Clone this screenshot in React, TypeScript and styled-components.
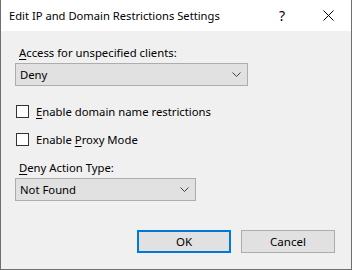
import React from "react";
import styled, { createGlobalStyle } from "styled-components";

const GlobalStyle = createGlobalStyle`
  html, body {
    margin: 0;
    padding: 0;
    background: #f0f0f0;
  }
  * {
    box-sizing: border-box;
  }
`;

const font = `"Noto Sans", "Open Sans", sans-serif`;

const Window = styled.div`
  width: 352px;
  height: 270px;
  display: flex;
  flex-direction: column;
  background: #f0f0f0;
  border: 1px solid #6f6f6f;
  border-top: none;
  font-family: ${font};
  font-size: 11.3px;
  color: #000;
`;

const TitleBar = styled.div`
  height: 31px;
  flex: none;
  display: flex;
  align-items: center;
  background: #fff;
  padding-left: 8px;
`;

const Title = styled.span`
  flex: 1;
  font-size: 11.2px;
  white-space: nowrap;
`;

const TitleButton = styled.button`
  width: 46px;
  height: 30px;
  border: none;
  background: transparent;
  display: flex;
  align-items: center;
  justify-content: center;
  font-family: ${font};
  font-size: 14px;
  color: #000;
  padding: 0;
`;

const Body = styled.div`
  flex: 1;
  display: flex;
  flex-direction: column;
  padding: 14px 16px 16px 14px;
`;

const Label = styled.div`
  line-height: 16px;
  padding-left: 4px;
  margin-top: ${({ $top }: { $top: number }) => `${$top}px`};
`;

const Key = styled.span`
  text-decoration: underline;
  text-underline-offset: 2px;
`;

const Combo = styled.div<{ $width: number }>`
  margin-top: 2px;
  width: ${({ $width }) => `${$width}px`};
  height: 23px;
  display: flex;
  align-items: center;
  justify-content: space-between;
  padding: 0 6px 0 4px;
  background: #e1e1e1;
  border: 1px solid #adadad;
`;

const CheckRow = styled.label<{ $top: number }>`
  display: flex;
  align-items: center;
  gap: 7px;
  height: 16px;
  margin-top: ${({ $top }) => `${$top}px`};
  padding-left: 1px;
`;

const CheckBox = styled.span`
  width: 13px;
  height: 13px;
  flex: none;
  background: #fff;
  border: 1px solid #333;
`;

const Footer = styled.div`
  margin-top: auto;
  display: flex;
  justify-content: flex-end;
  gap: 10px;
`;

const Button = styled.button<{ $primary?: boolean }>`
  width: 94px;
  height: 23px;
  background: #e1e1e1;
  border: ${({ $primary }) => ($primary ? "2px solid #0078d7" : "1px solid #adadad")};
  font-family: ${font};
  font-size: 11.5px;
  color: #000;
  padding: 0;
`;

const Chevron = () => (
  <svg width="9" height="5" viewBox="0 0 9 5">
    <path d="M0.5 0.5 L4.5 4.5 L8.5 0.5" fill="none" stroke="#404040" strokeWidth="1" />
  </svg>
);

const App = () => (
  <>
    <GlobalStyle />
    <Window>
      <TitleBar>
        <Title>Edit IP and Domain Restrictions Settings</Title>
        <TitleButton>?</TitleButton>
        <TitleButton>
          <svg width="11" height="11" viewBox="0 0 11 11">
            <path d="M0.5 0.5 L10.5 10.5 M10.5 0.5 L0.5 10.5" stroke="#000" strokeWidth="1" />
          </svg>
        </TitleButton>
      </TitleBar>
      <Body>
        <Label $top={0}>
          <Key>A</Key>ccess for unspecified clients:
        </Label>
        <Combo $width={233}>
          <span>Deny</span>
          <Chevron />
        </Combo>
        <CheckRow $top={17}>
          <CheckBox />
          <span>
            <Key>E</Key>nable domain name restrictions
          </span>
        </CheckRow>
        <CheckRow $top={12}>
          <CheckBox />
          <span>
            Enable <Key>P</Key>roxy Mode
          </span>
        </CheckRow>
        <Label $top={13}>
          <Key>D</Key>eny Action Type:
        </Label>
        <Combo $width={181}>
          <span>Not Found</span>
          <Chevron />
        </Combo>
        <Footer>
          <Button $primary>OK</Button>
          <Button>Cancel</Button>
        </Footer>
      </Body>
    </Window>
  </>
);

export default App;
